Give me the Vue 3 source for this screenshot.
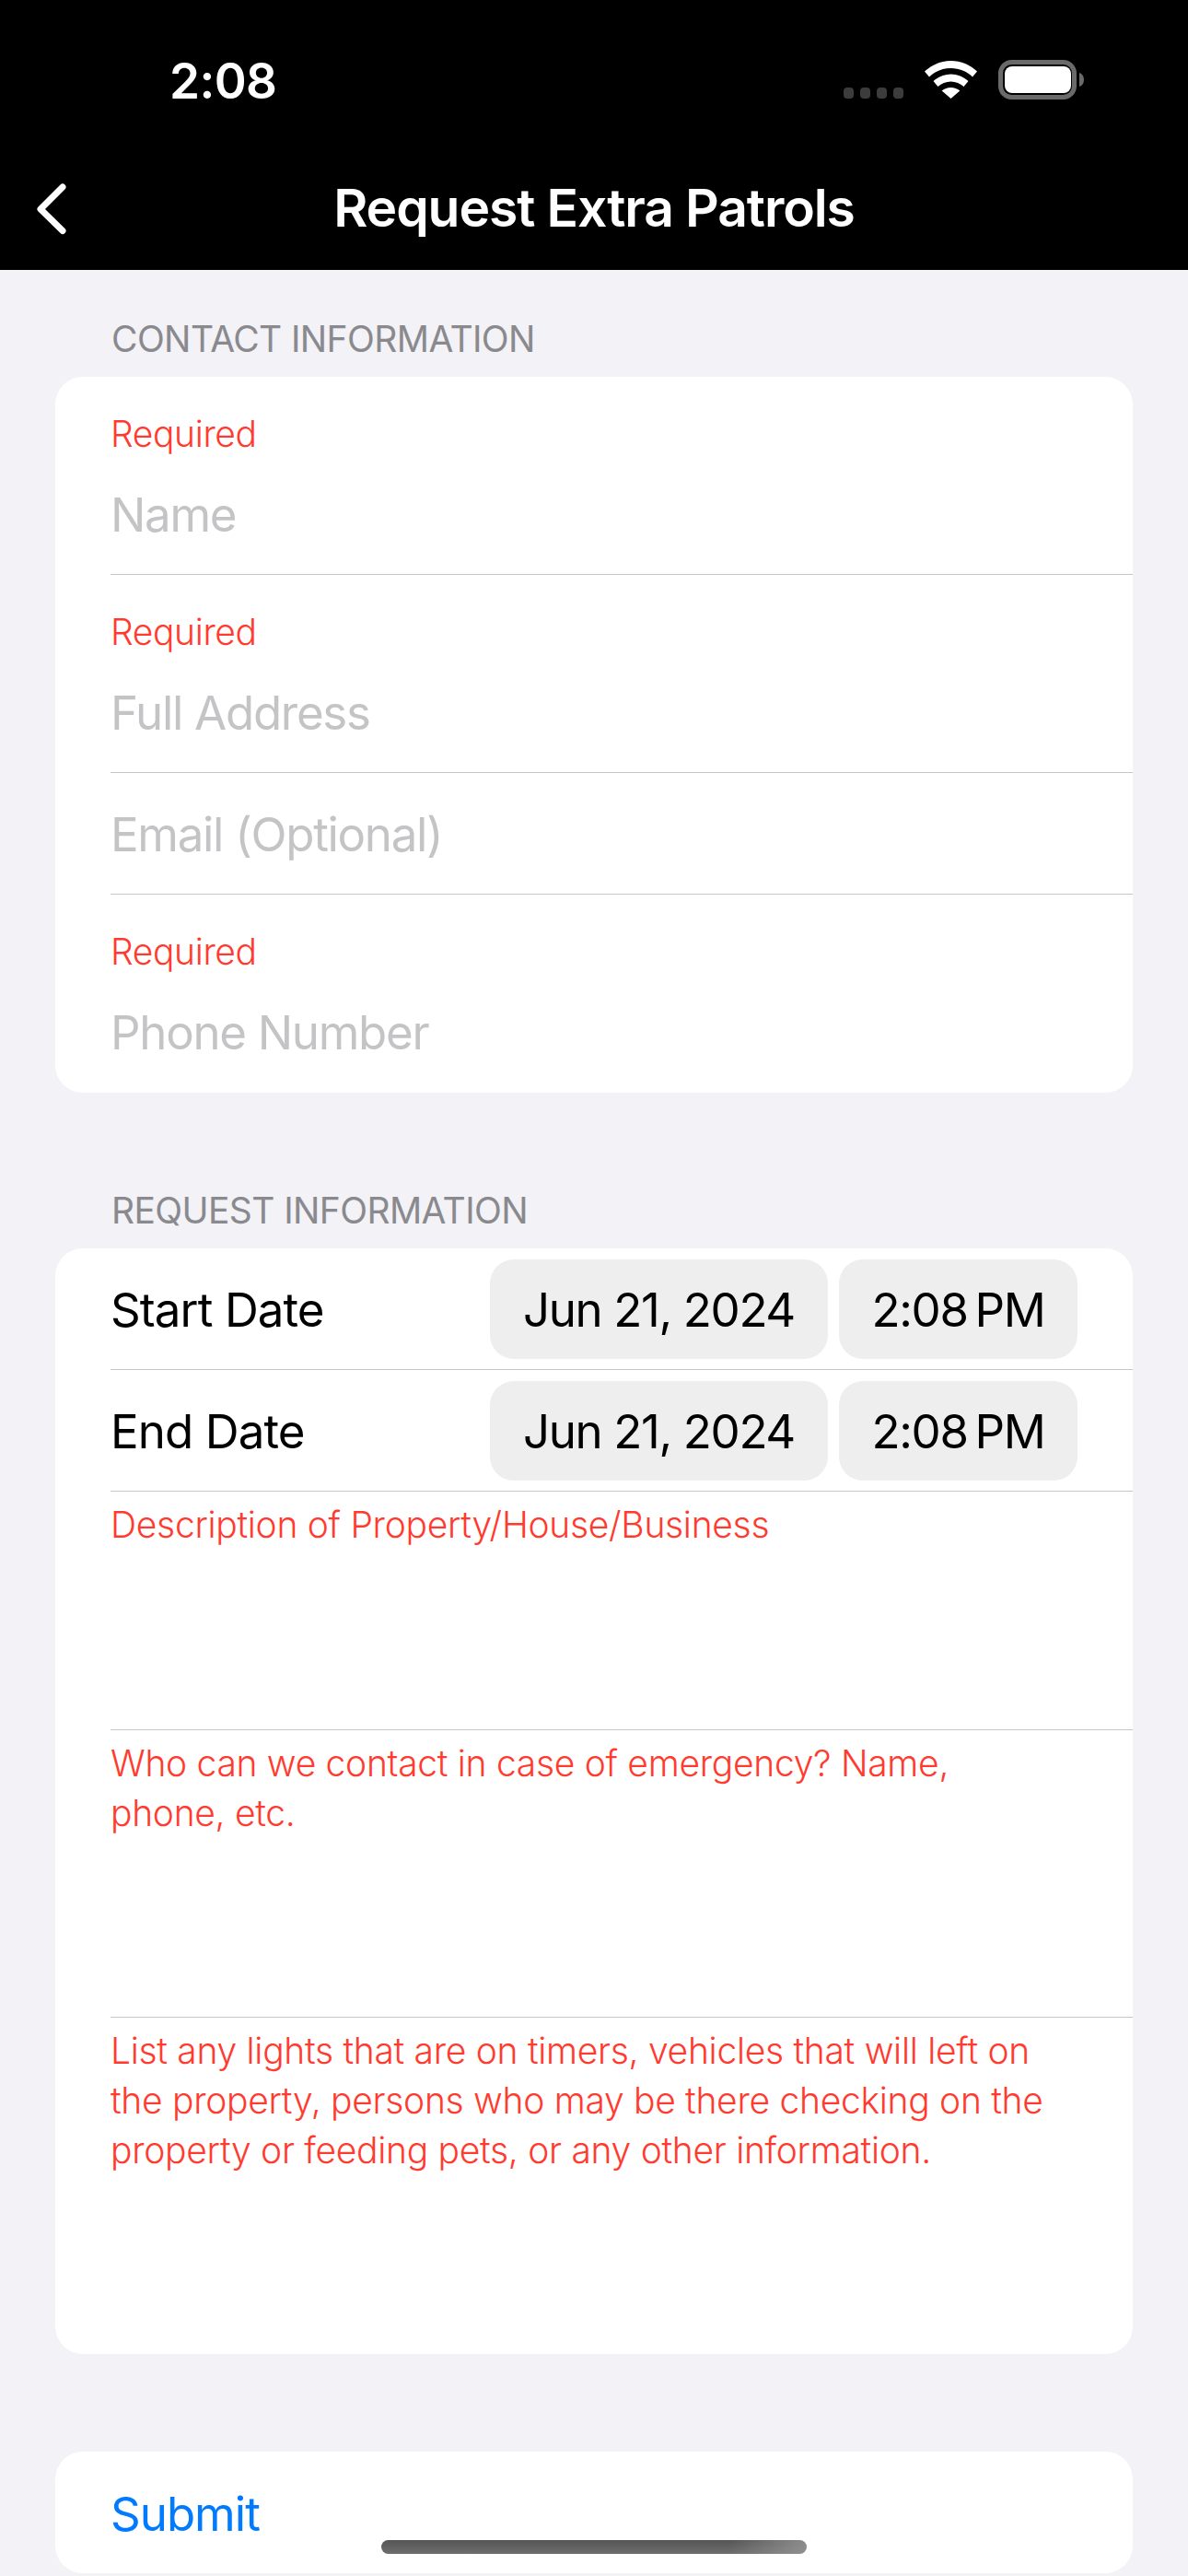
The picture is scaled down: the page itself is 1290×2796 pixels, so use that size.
<script setup>
const contact = [
  { label: 'Name', required: true },
  { label: 'Full Address', required: true },
  { label: 'Email (Optional)', required: false },
  { label: 'Phone Number', required: true }
]
const dates = ['Start Date', 'End Date']
const prompts = [
  { text: 'Description of Property/House/Business', cls: 'p1' },
  { text: 'Who can we contact in case of emergency? Name, phone, etc.', cls: 'p2' },
  { text: 'List any lights that are on timers, vehicles that will left on the property, persons who may be there checking on the property or feeding pets, or any other information.', cls: 'p3' }
]
</script>

<template>
  <div class="screen">
    <header class="top">
      <div class="status">
        <span class="clock">2:08</span>
        <div class="indicators">
          <div class="dots"><i></i><i></i><i></i><i></i></div>
          <svg class="wifi" width="57" height="41" viewBox="0 0 57 41">
            <path fill="#fff" d="M28.500 0C17.500 0 7.500 4.300 0 11.500l5 6C11 11.500 19.500 8 28.500 8s17.500 3.500 23.500 9.500l5-6C49.500 4.300 39.500 0 28.500 0Z"/>
            <path fill="#fff" d="M28.500 14.500c-7 0-14 3-19 7.500l5 6c3.800-3.400 8.800-5.500 14-5.500s10.200 2.100 14 5.500l5-6c-5-4.500-12-7.500-19-7.500Z"/>
            <path fill="#fff" d="M28.500 29c-3.800 0-7 1.300-9.800 3.500L28.500 41l9.800-8.500c-2.800-2.200-6-3.500-9.800-3.500Z"/>
          </svg>
          <svg class="battery" width="93" height="43" viewBox="0 0 93 43">
            <rect x="2.500" y="2.500" width="80" height="38" rx="12" fill="none" stroke="#6a6a6a" stroke-width="5"/>
            <rect x="7" y="7" width="72" height="29" rx="8" fill="#fff"/>
            <path d="M88 14c3 1 5 3.500 5 7.500s-2 6.500-5 7.500Z" fill="#6a6a6a"/>
          </svg>
        </div>
      </div>
      <nav class="nav">
        <svg class="back" width="44" height="66" viewBox="0 0 44 66">
          <path d="M32 9 8 33l24 23.500" fill="none" stroke="#fff" stroke-width="7" stroke-linecap="round" stroke-linejoin="round"/>
        </svg>
        <h1>Request Extra Patrols</h1>
      </nav>
    </header>

    <main class="content">
      <h2 class="section first">CONTACT INFORMATION</h2>
      <section class="card">
        <div v-for="f in contact" :key="f.label" class="row" :class="{ plain: !f.required }">
          <div v-if="f.required" class="req">Required</div>
          <div class="ph">{{ f.label }}</div>
        </div>
      </section>

      <h2 class="section second">REQUEST INFORMATION</h2>
      <section class="card">
        <div v-for="d in dates" :key="d" class="row date">
          <span class="dlabel">{{ d }}</span>
          <span class="pill day">Jun 21, 2024</span>
          <span class="pill time">2:08&#8239;PM</span>
        </div>
        <div v-for="p in prompts" :key="p.cls" class="row prompt" :class="p.cls">{{ p.text }}</div>
      </section>

      <section class="card submit">
        <span>Submit</span>
      </section>
    </main>
    <div class="home"></div>
  </div>
</template>

<style>
html, body { margin: 0; background: #f2f2f7; }
</style>

<style scoped>
.screen {
  position: relative;
  width: 1290px;
  height: 2796px;
  overflow: hidden;
  background: #f2f2f7;
  font-family: Inter, "Liberation Sans", sans-serif;
  color: #000;
}
.top { height: 293px; background: #000; color: #fff; box-sizing: border-box; }
.status { height: 174px; box-sizing: border-box; padding: 58px 113px 0 184px; display: flex; justify-content: space-between; align-items: flex-start; }
.clock { font-size: 53px; font-weight: 600; line-height: 60px; letter-spacing: -0.6px; }
.indicators { display: flex; align-items: flex-end; height: 50px; gap: 23px; }
.indicators svg { display: block; }
.wifi { margin-bottom: 1px; }
.dots { display: flex; gap: 7px; margin-bottom: 1px; }
.dots i { width: 11px; height: 12px; border-radius: 4px; background: #3c3c3c; }
.nav { height: 119px; box-sizing: border-box; padding-bottom: 16px; display: flex; align-items: center; justify-content: center; position: relative; }
.nav h1 { margin: 0; font-size: 57px; font-weight: 600; letter-spacing: -1.1px; line-height: 66px; }
.back { position: absolute; left: 36px; top: 20px; }
.content { padding: 0 60px; }
.section { margin: 0; padding-left: 61px; font-size: 39px; font-weight: 400; line-height: 48px; color: #8a8a8e; letter-spacing: -0.6px; }
.first { padding-top: 51px; padding-bottom: 17px; }
.second { padding-top: 104px; padding-bottom: 17px; }
.card { background: #fff; border-radius: 30px; overflow: hidden; }
.row { margin-left: 60px; border-bottom: 1px solid #c6c6c8; box-sizing: border-box; height: 215px; }
.row:last-child { border-bottom: 0; }
.row.plain { height: 132px; }
.req { font-size: 39px; line-height: 48px; color: #ff3b30; padding-top: 38px; letter-spacing: -0.4px; font-weight: 300; }
.ph { font-size: 51px; line-height: 62px; color: #c4c4c6; padding-top: 33px; letter-spacing: -1.3px; }
.row.plain .ph { padding-top: 36px; }
.row.date { height: 132px; display: flex; align-items: center; padding-top: 1px; }
.dlabel { width: 412px; font-size: 51px; letter-spacing: -0.9px; }
.pill { height: 108px; background: #eeeeef; border-radius: 26px; display: flex; align-items: center; justify-content: center; font-size: 51px; letter-spacing: -1.35px; }
.day { width: 367px; margin-right: 12px; }
.time { width: 259px; }
.prompt { font-size: 39px; line-height: 54px; color: #ff3b30; letter-spacing: -0.3px; font-weight: 300; padding: 9px 80px 0 0; }
.p1 { height: 259px; }
.p2 { height: 312px; }
.p3 { height: 365px; }
.submit { margin-top: 106px; height: 132px; padding: 37px 0 0 60px; box-sizing: border-box; font-size: 51px; line-height: 62px; color: #007aff; letter-spacing: -1px; }
.home { position: absolute; left: 414px; top: 2757px; width: 462px; height: 15px; border-radius: 8px; background: linear-gradient(to right, rgba(153,153,153,0) 82%, rgba(153,153,153,0.8) 100%), linear-gradient(180deg, #555 0%, #6e6e6e 100%); }
</style>
